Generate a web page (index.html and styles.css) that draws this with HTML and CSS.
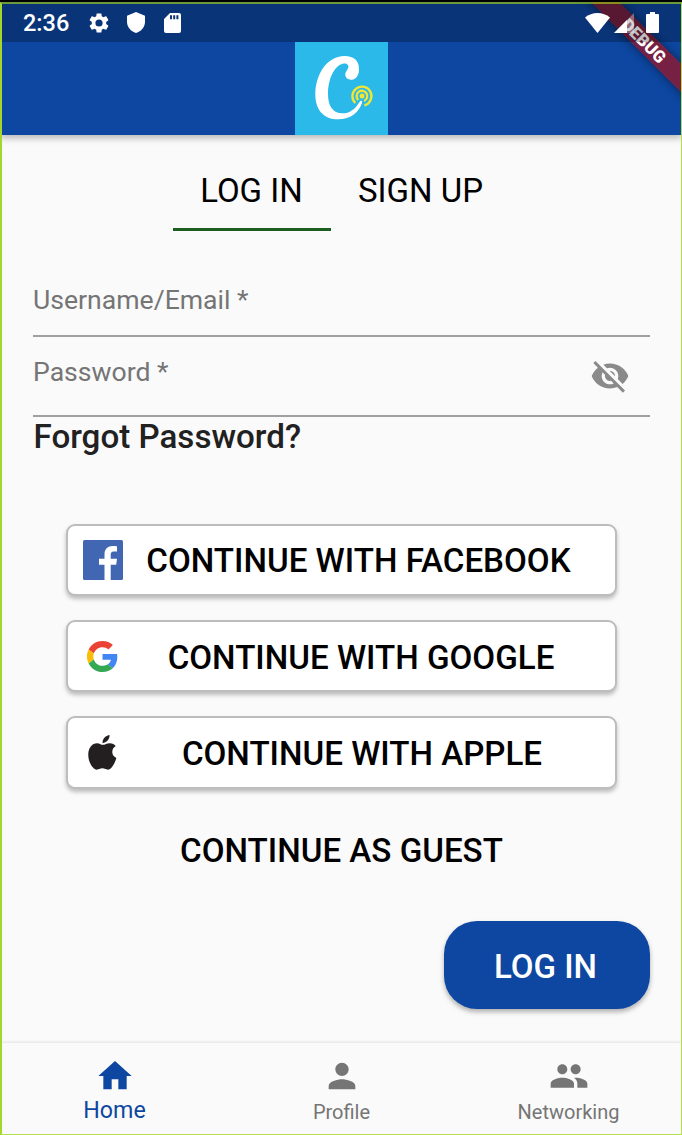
FILE: index.html
```html
<!DOCTYPE html>
<html lang="en">
<head>
<meta charset="utf-8">
<title>Log in</title>
<link rel="stylesheet" href="styles.css">
</head>
<body>
<div class="phone">
  <header class="header">
    <div class="status">
      <span class="clock">2:36</span>
      <svg class="gear" viewBox="2 2 20 20"><path d="M19.14 12.94c.04-.3.06-.61.06-.94 0-.32-.02-.64-.07-.94l2.03-1.58c.18-.14.23-.41.12-.61l-1.92-3.32c-.12-.22-.37-.29-.59-.22l-2.39.96c-.5-.38-1.03-.7-1.62-.94l-.36-2.54c-.04-.24-.24-.41-.48-.41h-3.84c-.24 0-.43.17-.47.41l-.36 2.54c-.59.24-1.13.57-1.62.94l-2.39-.96c-.22-.08-.47 0-.59.22L2.74 8.87c-.12.21-.08.47.12.61l2.03 1.58c-.05.3-.09.63-.09.94s.02.64.07.94l-2.03 1.58c-.18.14-.23.41-.12.61l1.92 3.32c.12.22.37.29.59.22l2.39-.96c.5.38 1.03.7 1.62.94l.36 2.54c.05.24.24.41.48.41h3.84c.24 0 .44-.17.47-.41l.36-2.54c.59-.24 1.13-.56 1.62-.94l2.39.96c.22.08.47 0 .59-.22l1.92-3.32c.12-.22.07-.47-.12-.61l-2.01-1.58zM12 15.6A3.6 3.6 0 1 1 12 8.4a3.6 3.6 0 0 1 0 7.2z"/></svg>
      <svg class="shield" viewBox="0 0 18 21"><path d="M9 0 0 3.800v6C0 15 3.800 19.600 9 21c5.200-1.400 9-6 9-11.200v-6z"/></svg>
      <svg class="card" viewBox="0 0 17 20"><path fill-rule="evenodd" d="M6 0h9a2 2 0 0 1 2 2v16a2 2 0 0 1-2 2H2a2 2 0 0 1-2-2V6zM6 2.200v4h2v-4zm3.200 0v4h2v-4zm3.200 0v4h2v-4z"/></svg>
      <svg class="wifi" viewBox="0 0 25 20"><path d="M0 4.500C7-1.500 18-1.500 25 4.500L12.500 20z"/></svg>
      <svg class="signal" viewBox="0 0 20 20"><path opacity=".35" d="M0 20 20 0v20z"/><path d="M0 20 13 7v13z"/></svg>
      <svg class="battery" viewBox="0 0 13 21"><path d="M4 0h5v2h3a1 1 0 0 1 1 1v17a1 1 0 0 1-1 1H1a1 1 0 0 1-1-1V3a1 1 0 0 1 1-1h3z"/></svg>
    </div>
    <div class="appbar">
      <svg class="logo" viewBox="45 36 279 279">
        <path fill="#2bb9ea" d="M45 36h279v279H45z"/>
        <path fill="#fff" d="M237 119C238 93 222 78 194 78 138 79 106 136 106 194c0 46 26 74 68 74 40 0 63-22 72-49 2-6-4-9-7-4-13 22-30 35-52 35-29 0-43-23-43-58 0-46 20-87 45-91 11-2 18 4 16 11-2 9-10 14-9 24 1 9 9 14 19 13 14-1 22-16 22-30z"/>
        <g fill="none" stroke="#f0e635" stroke-width="7">
          <path d="M226 219A28.500 28.500 0 1 1 253 226"/>
          <path d="M235 210A16 16 0 1 1 252 213"/>
        </g>
        <circle cx="246" cy="198" r="7.500" fill="#f0e635"/>
      </svg>
    </div>
    <div class="debug-corner"><div class="debug">DEBUG</div></div>
  </header>

  <main class="content">
    <nav class="tabs">
      <a class="tab active"><span>LOG IN</span></a>
      <a class="tab"><span>SIGN UP</span></a>
    </nav>
    <div class="field username"><span>Username/Email *</span></div>
    <div class="field password"><span>Password *</span>
      <svg class="eye" viewBox="0 0 24 24"><path d="M12 7c2.760 0 5 2.240 5 5 0 .65-.13 1.260-.36 1.830l2.920 2.920c1.510-1.260 2.700-2.890 3.430-4.750-1.730-4.390-6-7.500-11-7.500-1.400 0-2.740.25-3.980.7l2.160 2.160C10.740 7.130 11.350 7 12 7zM2 4.270l2.280 2.280.46.46C3.080 8.300 1.780 10.020 1 12c1.730 4.390 6 7.500 11 7.500 1.550 0 3.030-.3 4.380-.84l.42.42L19.730 22 21 20.730 3.270 3 2 4.270zM7.530 9.800l1.550 1.550c-.05.21-.08.43-.08.65 0 1.660 1.340 3 3 3 .22 0 .44-.03.65-.08l1.550 1.550c-.67.33-1.410.53-2.200.53-2.760 0-5-2.240-5-5 0-.79.2-1.530.53-2.200zm4.310-.78l3.150 3.150.02-.16c0-1.660-1.340-3-3-3l-.17.01z"/></svg>
    </div>
    <div class="forgot"><span>Forgot Password?</span></div>
    <div class="providers">
      <button class="provider">
        <svg class="brand" viewBox="0 0 40 40"><rect width="40" height="40" rx="1.500" fill="#4267b2"/><path fill="#fff" d="M21.500 40V24.700H16v-6h5.500v-4.200C21.500 9 24.700 6 29.800 6c1.800 0 3.300.1 4.200.2v5.400h-3.200c-2.600 0-3.100 1.300-3.100 3.200v3.900H34l-.8 6h-5.500V40z"/></svg>
        <span class="provider-label facebook-label"><span>CONTINUE WITH FACEBOOK</span></span>
      </button>
      <button class="provider">
        <svg class="brand google" viewBox="0 0 48 48"><path fill="#ea4335" d="M24 9.500c3.540 0 6.710 1.220 9.210 3.600l6.850-6.850C35.900 2.380 30.470 0 24 0 14.620 0 6.510 5.380 2.560 13.220l7.980 6.190C12.430 13.720 17.740 9.500 24 9.500z"/><path fill="#4285f4" d="M46.980 24.550c0-1.570-.15-3.090-.38-4.550H24v9.020h12.940c-.58 2.960-2.260 5.480-4.780 7.180l7.730 6c4.510-4.180 7.090-10.360 7.090-17.650z"/><path fill="#fbbc05" d="M10.530 28.590a14.500 14.500 0 0 1 0-9.180l-7.980-6.190a24 24 0 0 0 0 21.560z"/><path fill="#34a853" d="M24 48c6.480 0 11.930-2.130 15.890-5.810l-7.730-6c-2.150 1.450-4.920 2.300-8.160 2.300-6.260 0-11.570-4.220-13.470-9.910l-7.980 6.190C6.510 42.620 14.620 48 24 48z"/></svg>
        <span class="provider-label"><span>CONTINUE WITH GOOGLE</span></span>
      </button>
      <button class="provider">
        <svg class="brand apple" viewBox="97 104 87 107"><path fill="#231f20" d="M141 129c-2-12 9-23 21-25 1 13-9 24-21 25zM141 134c8 0 11-5 22-5 8 0 14 4 18 9-15 9-14 29 2 36-4 14-14 35-26 36-6 0-9-4-17-4s-11 4-17 4c-13-1-26-24-26-46 0-21 12-35 27-35 7 0 12 5 17 5z"/></svg>
        <span class="provider-label apple-label"><span>CONTINUE WITH APPLE</span></span>
      </button>
    </div>
    <div class="guest"><span>CONTINUE AS GUEST</span></div>
    <button class="login"><span>LOG IN</span></button>
  </main>

  <nav class="bottom">
    <a class="item current">
      <svg viewBox="0 0 24 24"><path d="M10 20v-6h4v6h5v-8h3L12 3 2 12h3v8z"/></svg><span>Home</span>
    </a>
    <a class="item">
      <svg viewBox="0 0 24 24"><path d="M12 12c2.210 0 4-1.790 4-4s-1.790-4-4-4-4 1.790-4 4 1.790 4 4 4zm0 2c-2.670 0-8 1.340-8 4v2h16v-2c0-2.660-5.330-4-8-4z"/></svg><span>Profile</span>
    </a>
    <a class="item">
      <svg viewBox="0 0 24 24"><path d="M16 11c1.660 0 2.990-1.340 2.990-3S17.660 5 16 5s-3 1.340-3 3 1.340 3 3 3zm-8 0c1.660 0 2.990-1.340 2.990-3S9.660 5 8 5 5 6.340 5 8s1.340 3 3 3zm0 2c-2.330 0-7 1.170-7 3.500V19h14v-2.500c0-2.330-4.670-3.500-7-3.500zm8 0c-.29 0-.62.02-.97.05 1.160.84 1.970 1.970 1.970 3.450V19h6v-2.500c0-2.330-4.670-3.500-7-3.500z"/></svg><span>Networking</span>
    </a>
  </nav>
  <div class="frame"></div>
</div>
</body>
</html>
```
FILE: styles.css
```css
* { box-sizing: border-box; }
body { margin: 0; background: #000; font-family: Roboto, "Liberation Sans", sans-serif; }
svg { display: block; flex: none; }
button { font: inherit; margin: 0; }
.phone { position: relative; width: 682px; height: 1135px; padding-top: 2px; display: flex; flex-direction: column; overflow: hidden; }
.frame { position: absolute; inset: 2px 0 0 0; border: solid; border-width: 2px 1px 1px 2px; border-color: rgba(166,216,20,.62) #b4e04b #b4e04b #a5d62a; z-index: 5; }

.header { position: relative; z-index: 2; height: 133px; flex: none; background: #0d47a1; box-shadow: 0 3px 7px rgba(0,0,0,.28); }
.status { position: relative; z-index: 2; height: 40px; padding: 1px 23px 0 23px; display: flex; align-items: center; background: rgba(0,0,0,.25); color: #fff; }
.status svg { fill: #fff; }
.clock { width: 66px; font-size: 23.500px; font-weight: 500; line-height: 40px; }
.gear { width: 20px; height: 20px; margin-right: 18px; }
.shield { width: 18px; height: 21px; margin-right: 19px; }
.card { width: 17px; height: 20px; }
.wifi { width: 25px; height: 20px; margin-left: auto; margin-right: 4px; }
.signal { width: 20px; height: 20px; margin-right: 12px; }
.battery { width: 13px; height: 21px; }
.appbar { height: 93px; display: flex; justify-content: center; }
.logo { width: 93px; height: 93px; }
.debug-corner { position: absolute; z-index: 1; top: 0; right: 0; width: 140px; height: 133px; overflow: hidden; }
.debug { position: absolute; left: 2px; top: 29px; width: 200px; height: 20px; line-height: 20px; text-align: center; transform: rotate(45deg); background: rgba(160,20,30,.72); box-shadow: 0 0 10px rgba(0,0,0,.5); color: #fff; font-size: 17px; font-weight: 900; }

.content { flex: 1; display: flex; flex-direction: column; padding: 16px 32px 0 33px; background: #fafafa; }
.tabs { display: flex; justify-content: center; height: 80px; margin-bottom: 34px; padding-right: 20px; }
.tab { width: 158px; font-size: 33px; line-height: 80px; height: 80px; text-align: center; color: #000; }
.tab.active { border-bottom: 3px solid #1b5e20; }
.tab:last-child { width: 180px; margin-right: -20px; }
.field { display: flex; justify-content: space-between; border-bottom: 2px solid #a0a0a0; color: #757575; font-size: 26.600px; }
.username { height: 72px; line-height: 70px; }
.password { height: 79.500px; line-height: 69px; }
.eye { width: 40px; height: 40px; margin: 19px 20px 0 0; fill: #8a8a8a; }
.forgot { height: 107.500px; padding-left: .5px; line-height: 39px; font-size: 33.150px; font-weight: 500; color: #212121; }
.providers { display: flex; flex-direction: column; gap: 24px; margin-top: -.4px; padding: 0 33px; }
.provider { display: flex; align-items: center; height: 72.300px; padding: 0 14px; border: 2px solid #bdbdbd; border-radius: 9px; background: #fff; box-shadow: 0 3px 4px rgba(0,0,0,.25); font-size: 33.150px; font-weight: 500; color: #000; }
.brand { width: 40px; height: 40px; margin-left: 1px; }
.google { width: 31px; height: 31px; margin: 0 5px; }
.apple { width: 29px; height: 35px; margin: 0 6px; }
.provider-label { flex: 1; padding-top: 2px; padding-right: 2px; text-align: center; white-space: nowrap; }
.facebook-label { padding-right: 7px; }
.apple-label { padding-right: 0; }
.guest { height: 132.500px; line-height: 123px; font-size: 33.150px; font-weight: 500; text-align: center; }
.login { align-self: flex-end; width: 206px; height: 88px; padding: 3px 9px 0 6px; border: 0; border-radius: 33px; background: #0d47a1; color: #fff; font-size: 33px; font-weight: 500; box-shadow: 0 3px 5px rgba(0,0,0,.3); }

.bottom { position: relative; flex: none; height: 92px; padding-left: 1px; display: flex; background: #fafafa; box-shadow: 0 -1px 3px rgba(0,0,0,.1); }
.item { flex: 1; padding-top: 13px; display: flex; flex-direction: column; align-items: center; color: #757575; font-size: 20px; line-height: 28px; }
.item svg { width: 40px; height: 40px; fill: currentColor; }
.item span { padding-top: 2px; }
.current { color: #0d47a1; font-size: 23.200px; }
.current span { padding-top: 0; }
```
